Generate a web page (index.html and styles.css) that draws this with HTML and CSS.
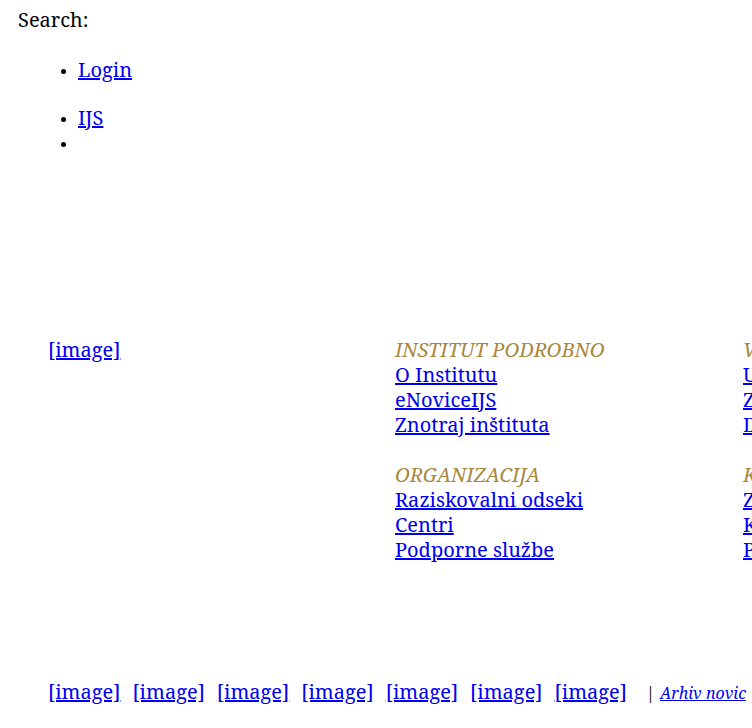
FILE: index.html
```html
<!DOCTYPE html>
<html lang="sl">
<head>
<meta charset="utf-8">
<title>IJS</title>
<link rel="stylesheet" href="styles.css">
</head>
<body>
<div class="page">
  <header class="top">
    <div class="search">Search:</div>
    <ul class="menu first">
      <li><a href="#">Login</a></li>
    </ul>
    <ul class="menu second">
      <li><a href="#">IJS</a></li>
      <li></li>
    </ul>
  </header>
  <main class="links">
    <div class="logo"><a href="#">[image]</a></div>
    <div class="col">
      <div class="group">
        <em class="head">INSTITUT PODROBNO</em>
        <a href="#">O Institutu</a>
        <a href="#">eNoviceIJS</a>
        <a href="#">Znotraj inštituta</a>
      </div>
      <div class="group">
        <em class="head">ORGANIZACIJA</em>
        <a href="#">Raziskovalni odseki</a>
        <a href="#">Centri</a>
        <a href="#">Podporne službe</a>
      </div>
    </div>
    <div class="col">
      <div class="group">
        <em class="head">VIRI</em>
        <a href="#">Uporabne povezave</a>
        <a href="#">Zaposlitve</a>
        <a href="#">Dogodki</a>
      </div>
      <div class="group">
        <em class="head">KONTAKT</em>
        <a href="#">Zaposleni</a>
        <a href="#">Kontakti</a>
        <a href="#">Prijava</a>
      </div>
    </div>
  </main>
  <footer class="bottom">
    <a href="#">[image]</a>
    <a href="#">[image]</a>
    <a href="#">[image]</a>
    <a href="#">[image]</a>
    <a href="#">[image]</a>
    <a href="#">[image]</a>
    <a href="#">[image]</a>
    <span class="sep">|</span>
    <a href="#" class="archive">Arhiv novic</a>
  </footer>
</div>
</body>
</html>
```
FILE: styles.css
```css
html {
  overflow: hidden;
}
body {
  margin: 0;
  font-family: "Noto Serif", "DejaVu Serif", serif;
  font-size: 20px;
  line-height: 25px;
  color: #000;
  background: #fff;
}
a {
  color: #0000ee;
}
.page {
  padding: 7px 0 0 18px;
  width: 1100px;
}
.top {
  height: 330px;
}
.menu {
  margin: 0;
  padding-left: 60px;
}
.menu li {
  height: 25px;
}
.menu li::marker {
  font-size: 14px;
}
.menu.first {
  margin-top: 25px;
}
.menu.second {
  margin-top: 23px;
}
.links {
  display: grid;
  grid-template-columns: 347px 348px 340px;
  padding-left: 30px;
}
.col {
  display: flex;
  flex-direction: column;
  gap: 25px;
}
.group {
  display: flex;
  flex-direction: column;
  align-items: flex-start;
}
.head {
  color: #a8883c;
}
.bottom {
  display: flex;
  align-items: baseline;
  gap: 12px;
  margin-top: 117px;
  padding-left: 30px;
}
.sep {
  margin-left: 7px;
  font-size: 16px;
  color: #000;
}
.archive {
  margin-left: -7px;
  font-style: italic;
  font-size: 16px;
}
```
